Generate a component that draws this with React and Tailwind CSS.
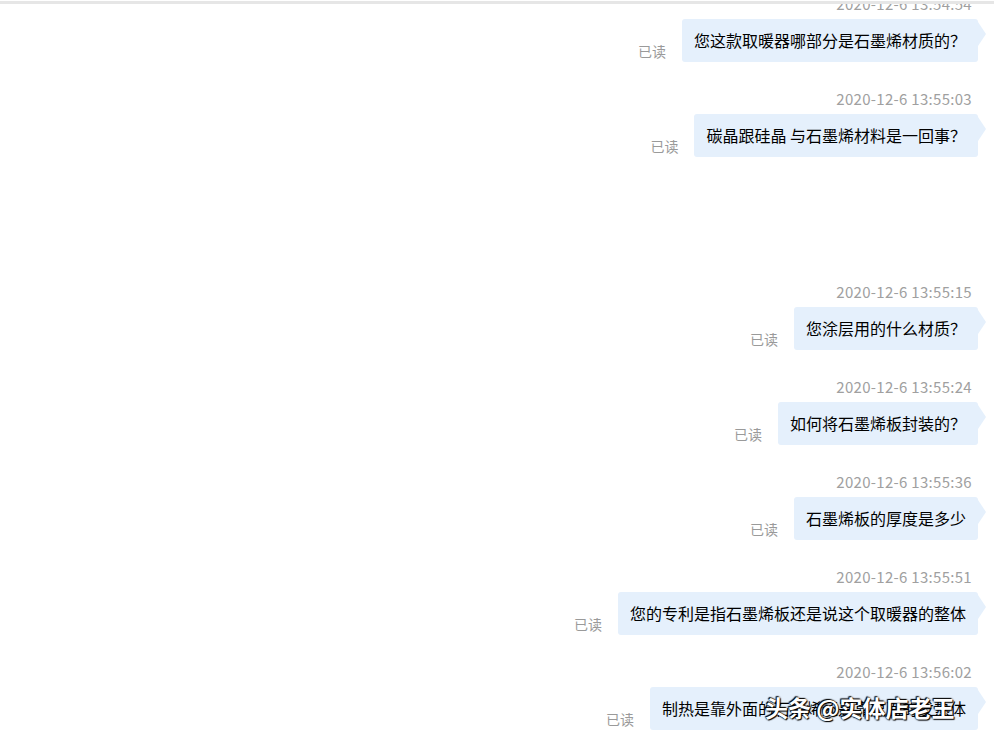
const messages = [
    { time: '2020-12-6 13:54:54', text: '您这款取暖器哪部分是石墨烯材质的？' },
    { time: '2020-12-6 13:55:03', text: '碳晶跟硅晶 与石墨烯材料是一回事？', gapAfter: true },
    { time: '2020-12-6 13:55:15', text: '您涂层用的什么材质？' },
    { time: '2020-12-6 13:55:24', text: '如何将石墨烯板封装的？' },
    { time: '2020-12-6 13:55:36', text: '石墨烯板的厚度是多少' },
    { time: '2020-12-6 13:55:51', text: '您的专利是指石墨烯板还是说这个取暖器的整体' },
    { time: '2020-12-6 13:56:02', text: '制热是靠外面的石墨烯还是靠里面的发热体' }
];

function Message({ time, text }) {
    return (
        <div className="h-[95px] flex flex-col">
            <div className="h-[20px] leading-[20px] text-right pr-[22px] text-[15px] tracking-[0.3px] text-[#a0a0a0]">
                {time}
            </div>
            <div className="mt-[5px] flex justify-end items-end pr-[16px]">
                <span className="mr-[16px] mb-[1px] text-[14px] leading-[20px] text-[#9a9a9a]">已读</span>
                <div className="relative h-[43px] px-[12px] rounded-[3px] bg-[#e5f0fc] text-[16px] leading-[43px] text-black whitespace-nowrap">
                    {text}
                    <span className="absolute left-full top-[3px] w-0 h-0 border-y-[12px] border-y-transparent border-l-[8px] border-l-[#e5f0fc]"></span>
                </div>
            </div>
        </div>
    );
}

export default function App() {
    return (
        <div
            className="relative w-[994px] h-[739px] bg-white flex flex-col overflow-hidden"
            style={{ fontFamily: '"Noto Sans CJK SC", "Noto Sans", sans-serif' }}
        >
            {/* top border of the chat pane */}
            <div className="h-[4px] border-t border-white bg-[#e6e6e6] shrink-0"></div>
            <div className="flex-1 overflow-hidden">
                <div className="-mt-[10px]">
                    {messages.map((m, i) => (
                        <div key={i}>
                            <Message time={m.time} text={m.text} />
                            {m.gapAfter && <div className="h-[98px]"></div>}
                        </div>
                    ))}
                </div>
            </div>

            {/* watermark */}
            <div className="absolute left-[765px] top-[692px] text-[23px] leading-[30px] font-bold text-white whitespace-nowrap [text-shadow:0_0_2px_#000,1px_1px_1px_#000,-1px_-1px_1px_#000]">
                头条 @实体店老王
            </div>
        </div>
    );
}
